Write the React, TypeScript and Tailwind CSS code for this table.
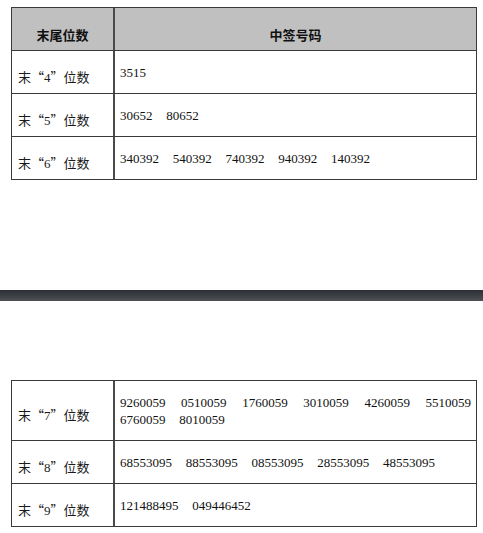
import React from "react";

interface Row {
  digit: string;
  numbers: string[];
  tall?: boolean;
}

const topRows: Row[] = [
  { digit: "4", numbers: ["3515"] },
  { digit: "5", numbers: ["30652", "80652"] },
  { digit: "6", numbers: ["340392", "540392", "740392", "940392", "140392"] },
];

const bottomRows: Row[] = [
  {
    digit: "7",
    numbers: [
      "9260059",
      "0510059",
      "1760059",
      "3010059",
      "4260059",
      "5510059",
      "6760059",
      "8010059",
    ],
    tall: true,
  },
  { digit: "8", numbers: ["68553095", "88553095", "08553095", "28553095", "48553095"] },
  { digit: "9", numbers: ["121488495", "049446452"] },
];

function Label({ digit }: { digit: string }) {
  return (
    <div className="pt-[9px] pl-[6px] text-[13px] leading-none whitespace-nowrap text-[#1a1a1a] font-['Noto_Sans_CJK_SC',sans-serif]">
      末“<span className="font-['Liberation_Serif',serif]">{digit}</span>”位数
    </div>
  );
}

function DataRow({ row }: { row: Row }) {
  return (
    <div
      className={`flex border-t border-[#3a3a3a] ${row.tall ? "h-[60px]" : "h-[43px]"}`}
    >
      <div className="flex w-[103px] shrink-0 items-center border-r-2 border-[#4a4a4a]">
        <Label digit={row.digit} />
      </div>
      <div className="flex flex-1 items-center px-[5px] pt-[1px]">
        <p className="w-full text-justify text-[13px] leading-[17px] text-[#111] [word-spacing:10.5px] font-['Liberation_Serif',serif]">
          {row.numbers.join(" ")}
        </p>
      </div>
    </div>
  );
}

export default function App() {
  return (
    <div className="h-[533px] w-[483px] overflow-hidden bg-white">
      <div className="ml-[11px] mr-[6px] mt-[7px] border border-[#3a3a3a]">
        <div className="flex h-[42px] bg-[#c0c0c0] text-[13px] font-bold leading-none text-[#111] font-['Noto_Sans_CJK_SC',sans-serif]">
          <div className="flex w-[103px] shrink-0 items-center justify-center border-r-2 border-[#4a4a4a] pt-[10px]">
            末尾位数
          </div>
          <div className="flex flex-1 items-center justify-center pt-[10px]">中签号码</div>
        </div>
        {topRows.map((r) => (
          <DataRow key={r.digit} row={r} />
        ))}
      </div>

      <div className="mt-[110px] h-[11px] w-full bg-gradient-to-b from-[#2c3034] to-[#4d5155]" />

      <div className="ml-[11px] mr-[6px] mt-[79px] border-b border-x border-[#3a3a3a]">
        {bottomRows.map((r) => (
          <DataRow key={r.digit} row={r} />
        ))}
      </div>
    </div>
  );
}
